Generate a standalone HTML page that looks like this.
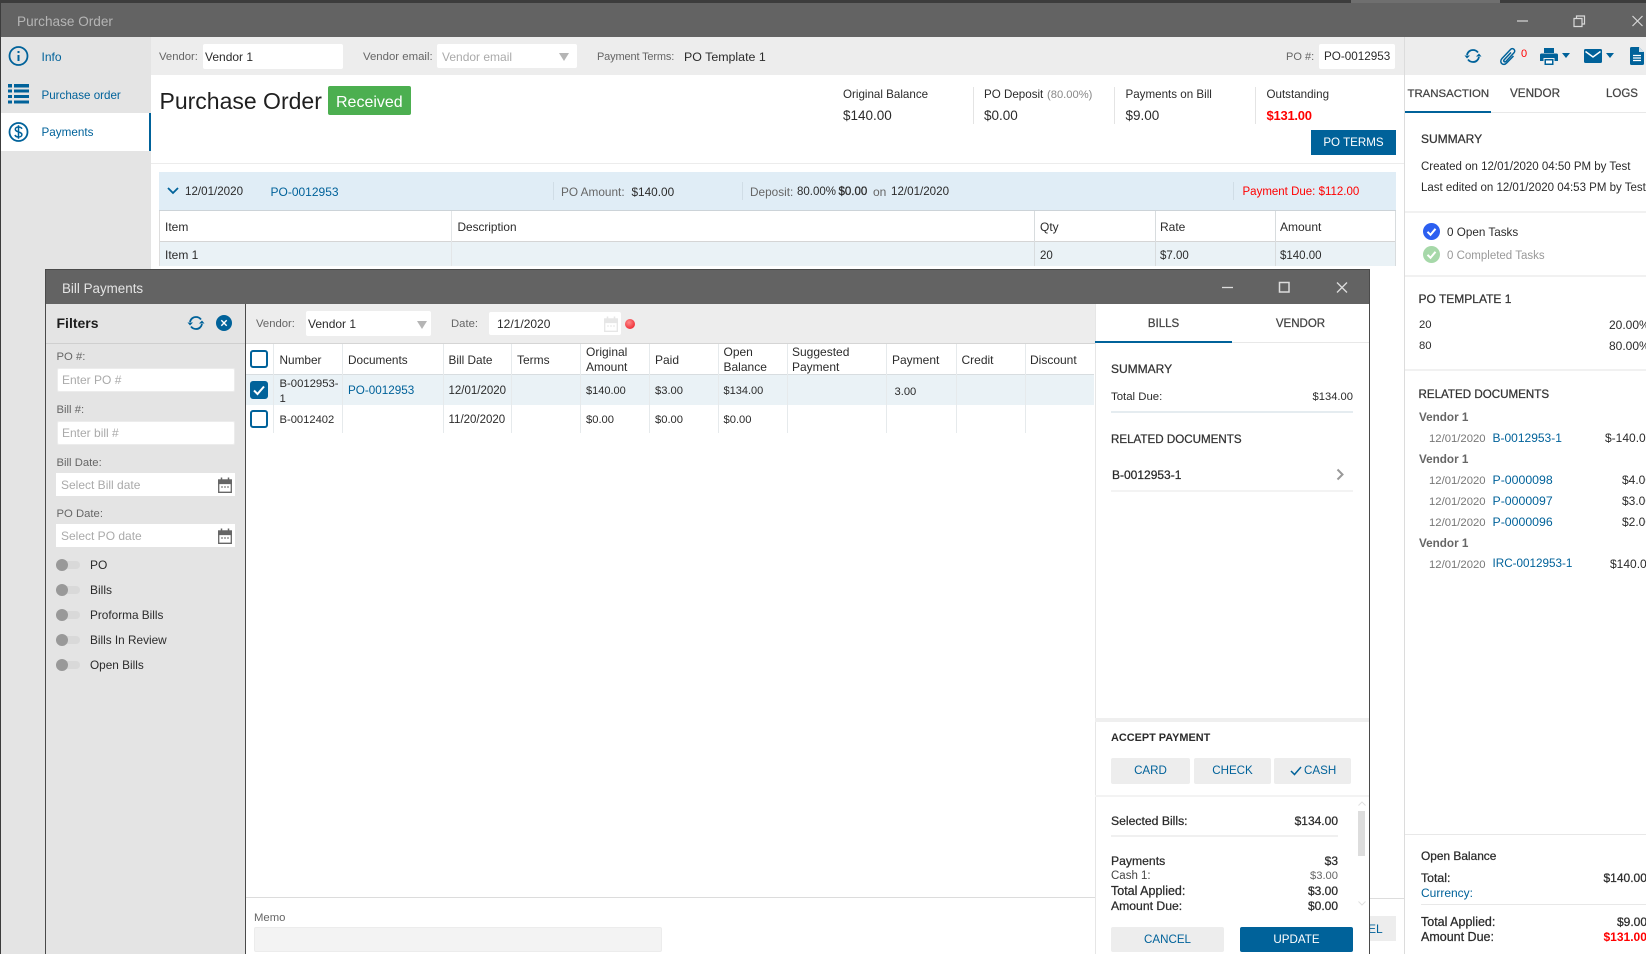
<!DOCTYPE html>
<html lang="en"><head><meta charset="utf-8"><title>Purchase Order</title>
<style>
html,body{margin:0;padding:0;width:1646px;height:954px;overflow:hidden;background:#fff}
body{position:relative;font-family:"Liberation Sans",Arial,sans-serif;font-size:12px;color:#2b2b2b}
.t{position:absolute;white-space:nowrap;line-height:16px}
.b{position:absolute;box-sizing:border-box}
.l{color:#00629a}.g{color:#666}.p{color:#aaa}.r{color:#f00}
.m{-webkit-text-stroke:.25px}.w{font-weight:bold}
.c{text-align:center}
.s{font-size:11.3px}
svg{position:absolute;overflow:visible}
.btn{position:absolute;box-sizing:border-box;background:#ededed;border-radius:2px;color:#00629a;text-align:center;line-height:26px;font-size:11.6px}
.ku{position:absolute;left:56px;width:24px;height:8px;border-radius:4px;background:#d9d9d9}
.ku:before{content:"";position:absolute;left:0;top:-2px;width:12px;height:12px;border-radius:6px;background:#999}
.chk{position:absolute;left:250px;width:18px;height:18px;box-sizing:border-box;border:2.5px solid #00629a;border-radius:3px;background:#fff}
</style></head><body>

<!-- Back window chrome -->
<div class="b" style="left:0;top:0;width:1646px;height:3px;background:#3c3c3c"></div>
<div class="b" style="left:1351px;top:0;width:149px;height:3px;background:#6f6f6f"></div>
<div class="b" style="left:0;top:3px;width:1646px;height:34px;background:#636363"></div>
<div class="b" style="left:0;top:0;width:1px;height:954px;background:#3c3c3c"></div>
<div class="t" style="left:17px;top:14px;font-size:13.600px;color:#b5b5b5">Purchase Order</div>
<svg style="left:1517px;top:15px" width="130" height="12" fill="none" stroke="#d8d8d8" stroke-width="1.200"><path d="M0 6H11"/><path d="M57 3.500h8v8h-8zM59.500 3.500V1h8v8H65"/><path d="M115.500 1l10 10M125.500 1l-10 10"/></svg>

<!-- Sidebar -->
<div class="b" style="left:1px;top:37px;width:150px;height:917px;background:#e4e4e4"></div>
<div class="b" style="left:1px;top:113px;width:150px;height:38px;background:#fff;border-right:2px solid #00629a"></div>
<svg style="left:8px;top:46px" width="21" height="20" viewBox="0 0 21 20" fill="none" stroke="#00629a" stroke-width="1.800"><circle cx="10.500" cy="10" r="9"/><path d="M10.500 9v6M10.500 5v2" stroke-width="2"/></svg>
<div class="t l" style="left:41.500px;top:49px">Info</div>
<svg style="left:8px;top:84px" width="21" height="20" fill="#00629a"><rect x="0" y="0" width="4" height="3.500"/><rect x="6" y="0" width="15" height="3.500"/><rect x="0" y="5.500" width="4" height="3"/><rect x="6" y="5.500" width="15" height="3"/><rect x="0" y="11" width="4" height="3"/><rect x="6" y="11" width="15" height="3"/><rect x="0" y="16.500" width="4" height="3"/><rect x="6" y="16.500" width="15" height="3"/></svg>
<div class="t l" style="left:41.500px;top:88px;font-size:11.600px">Purchase order</div>
<svg style="left:8px;top:122px" width="21" height="20" viewBox="0 0 21 20" fill="none" stroke="#00629a" stroke-width="1.800"><circle cx="10.500" cy="10" r="9"/><path d="M14 6.800C13.300 5.500 12 5 10.500 5 8.800 5 7.300 5.800 7.300 7.300c0 3.300 6.600 2 6.600 5.400 0 1.500-1.600 2.300-3.400 2.300-1.700 0-3-.7-3.600-2M10.500 3.300v13.400" stroke-width="1.500"/></svg>
<div class="t l" style="left:41.500px;top:125px;font-size:11.700px">Payments</div>

<!-- Top bar -->
<div class="b" style="left:151px;top:37px;width:1495px;height:38px;background:#ededed"></div>
<div class="t g s" style="left:159px;top:49px">Vendor:</div>
<div class="b" style="left:203px;top:44px;width:140px;height:25px;background:#fff;border-radius:2px"></div>
<div class="t" style="left:205px;top:49px">Vendor 1</div>
<div class="t g" style="left:363px;top:49px;font-size:11.400px">Vendor email:</div>
<div class="b" style="left:437px;top:44px;width:140px;height:24px;background:#fff;border-radius:2px"></div>
<div class="t p" style="left:442px;top:49px">Vendor email</div>
<svg style="left:559px;top:53px" width="10" height="8"><path d="M0 0H10L5 8z" fill="#b5b5b5"/></svg>
<div class="t g" style="left:597px;top:49px;font-size:11px;letter-spacing:-.15px">Payment Terms:</div>
<div class="t" style="left:684px;top:49px;font-size:12.400px">PO Template 1</div>
<div class="t g" style="left:1286px;top:49px;font-size:11px">PO #:</div>
<div class="b" style="left:1319px;top:44px;width:76px;height:25px;background:#fff;border-radius:2px"></div>
<div class="t" style="left:1324px;top:49px;font-size:11.700px">PO-0012953</div>

<!-- Heading -->
<div class="t" style="left:159.500px;top:93px;font-size:23px;color:#1f1f1f">Purchase Order</div>
<div class="b" style="left:328px;top:86px;width:83px;height:29px;background:#4caf50;border-radius:2px"></div>
<div class="t" style="left:336px;top:94.500px;font-size:16px;color:#fff">Received</div>

<div class="t" style="left:843px;top:87px;font-size:11.600px">Original Balance</div>
<div class="t" style="left:843px;top:108px;font-size:13.500px">$140.00</div>
<div class="b" style="left:973px;top:87px;width:1px;height:37px;background:#e4e4e4"></div>
<div class="t" style="left:984px;top:87px;font-size:11.600px">PO Deposit</div>
<div class="t" style="left:1047px;top:87px;font-size:11.200px;color:#888">(80.00%)</div>
<div class="t" style="left:984px;top:108px;font-size:13.500px">$0.00</div>
<div class="b" style="left:1114px;top:87px;width:1px;height:37px;background:#e4e4e4"></div>
<div class="t" style="left:1125.500px;top:87px;font-size:11.600px">Payments on Bill</div>
<div class="t" style="left:1125.500px;top:108px;font-size:13.500px">$9.00</div>
<div class="b" style="left:1255px;top:87px;width:1px;height:37px;background:#e4e4e4"></div>
<div class="t" style="left:1266.500px;top:87px;font-size:11.600px">Outstanding</div>
<div class="t r w" style="left:1266.500px;top:108px;font-size:13px;letter-spacing:-.25px">$131.00</div>
<div class="b c" style="left:1311px;top:130px;width:85px;height:25px;background:#00629a;color:#fff;line-height:26px;font-size:11.600px">PO TERMS</div>
<div class="b" style="left:151px;top:163px;width:1253px;height:1px;background:#ececec"></div>

<!-- PO row -->
<div class="b" style="left:159px;top:172px;width:1237px;height:38px;background:#e0edf6"></div>
<svg style="left:167px;top:187px" width="12" height="8" fill="none" stroke="#00629a" stroke-width="1.800"><path d="M1 1l5 5 5-5"/></svg>
<div class="t" style="left:185px;top:183.500px;font-size:11.600px">12/01/2020</div>
<div class="t l" style="left:270.500px;top:183.500px">PO-0012953</div>
<div class="b" style="left:553px;top:182px;width:1px;height:18px;background:#d0dde6"></div>
<div class="t g" style="left:561px;top:183.500px;font-size:11.800px">PO Amount:</div>
<div class="t" style="left:631.500px;top:183.500px;font-size:11.800px">$140.00</div>
<div class="b" style="left:742px;top:182px;width:1px;height:18px;background:#d0dde6"></div>
<div class="t g" style="left:750px;top:183.500px;font-size:11.800px">Deposit:</div>
<div class="t" style="left:797px;top:184px;font-size:11.500px">80.00%</div>
<div class="t m" style="left:838.500px;top:184px;font-size:11.500px">$0.00</div>
<div class="t g" style="left:873px;top:183.500px">on</div>
<div class="t" style="left:891px;top:183.500px;font-size:11.600px">12/01/2020</div>
<div class="b" style="left:1233px;top:182px;width:1px;height:18px;background:#d0dde6"></div>
<div class="t r" style="left:1242.500px;top:183.500px;font-size:11.500px">Payment Due: $112.00</div>

<!-- PO table -->
<div class="b" style="left:159px;top:210px;width:1237px;height:1px;background:#ccd3d8"></div>
<div class="b" style="left:159px;top:241px;width:1236px;height:1px;background:#d5d5d5"></div>
<div class="b" style="left:160px;top:242px;width:1236px;height:24px;background:#eaf2f6"></div>
<div class="b" style="left:159px;top:211px;width:1px;height:55px;background:#ddd"></div>
<div class="b" style="left:451px;top:211px;width:1px;height:55px;background:#e3e6e8"></div>
<div class="b" style="left:1034px;top:211px;width:1px;height:55px;background:#d8dcde"></div>
<div class="b" style="left:1154.500px;top:211px;width:1px;height:55px;background:#d8dcde"></div>
<div class="b" style="left:1274.500px;top:211px;width:1px;height:55px;background:#d8dcde"></div>
<div class="b" style="left:1394.500px;top:211px;width:1px;height:55px;background:#d8dcde"></div>
<div class="t" style="left:165px;top:219px">Item</div>
<div class="t" style="left:457.500px;top:219px;font-size:11.800px">Description</div>
<div class="t" style="left:1040px;top:219px">Qty</div>
<div class="t" style="left:1160px;top:219px">Rate</div>
<div class="t" style="left:1280px;top:219px">Amount</div>
<div class="t" style="left:165px;top:247px">Item 1</div>
<div class="t" style="left:1040px;top:248px;font-size:11.500px">20</div>
<div class="t" style="left:1160px;top:248px;font-size:11.500px">$7.00</div>
<div class="t" style="left:1280px;top:248px;font-size:11.500px">$140.00</div>

<!-- Right panel -->
<div class="b" style="left:1404px;top:37px;width:1px;height:917px;background:#dcdcdc"></div>
<svg style="left:1464px;top:47px" width="18" height="18" viewBox="0 0 18 18" fill="none" stroke="#00629a" stroke-width="1.800"><path d="M3 8c.6-3 3-5 6-5 2 0 3.800.9 5 2.500"/><path d="M15 10c-.6 3-3 5-6 5-2 0-3.800-.9-5-2.500"/><path d="M0.500 8.500H6L3 11.500z" fill="#00629a" stroke="none"/><path d="M17.500 9.500H12L15 6.500z" fill="#00629a" stroke="none"/></svg>
<svg style="left:1499px;top:47px" width="18" height="19" viewBox="0 0 18 19" fill="none" stroke="#00629a" stroke-width="1.500"><path d="M12 5.500L5.200 12.800c-1.200 1.400.5 2.900 1.800 1.600L15 5.800c2.200-2.400-1.200-5.700-3.500-3.300L3 11.500c-3.300 3.600 1 8.200 4.500 4.600L14.500 9"/></svg>
<div class="t r" style="left:1521px;top:46px;font-size:11px">0</div>
<svg style="left:1540px;top:48px" width="18" height="17" fill="#00629a"><path d="M4 0h10v5H4z"/><path d="M1.500 5.500h15A1.500 1.500 0 0 1 18 7v6h-3.500v-3h-11v3H0V7a1.500 1.500 0 0 1 1.500-1.500z"/><path d="M4.500 11h9v6h-9z"/><path d="M6 12.500h6v3H6z" fill="#fff"/></svg>
<svg style="left:1562px;top:53px" width="8" height="5"><path d="M0 0H8L4 5z" fill="#00629a"/></svg>
<svg style="left:1584px;top:49px" width="18" height="14"><rect width="18" height="14" rx="1.500" fill="#00629a"/><path d="M1.500 2.500L9 8l7.500-5.500" fill="none" stroke="#fff" stroke-width="1.500"/></svg>
<svg style="left:1606px;top:53px" width="8" height="5"><path d="M0 0H8L4 5z" fill="#00629a"/></svg>
<svg style="left:1630px;top:47px" width="14" height="18"><path d="M1.500 0H9l5 5v11.500a1.500 1.500 0 0 1-1.500 1.500h-11A1.500 1.500 0 0 1 0 16.500v-15A1.500 1.500 0 0 1 1.500 0z" fill="#00629a"/><path d="M3 8.500h8M3 11h8M3 13.500h8" stroke="#fff" stroke-width="1.300"/><path d="M9 0v5h5z" fill="#cfe0ea"/></svg>

<div class="t m" style="left:1407.500px;top:86px;color:#444;font-size:11.400px">TRANSACTION</div>
<div class="t m" style="left:1510px;top:86px;color:#444;font-size:11.700px">VENDOR</div>
<div class="t m" style="left:1606px;top:86px;color:#444;font-size:11.500px">LOGS</div>
<div class="b" style="left:1405px;top:112px;width:241px;height:1px;background:#e8e8e8"></div>
<div class="b" style="left:1405px;top:111px;width:86px;height:2px;background:#00629a"></div>

<div class="t m" style="left:1421px;top:130.500px;color:#333">SUMMARY</div>
<div class="t" style="left:1421px;top:159px;font-size:11.500px">Created on 12/01/2020 04:50 PM by Test</div>
<div class="t" style="left:1421px;top:179.500px;font-size:11.500px">Last edited on 12/01/2020 04:53 PM by Test</div>
<div class="b" style="left:1405px;top:211px;width:241px;height:2px;background:#f1f1f1"></div>
<svg style="left:1423px;top:222.500px" width="17" height="17"><circle cx="8.500" cy="8.500" r="8.500" fill="#2c5ff0"/><path d="M4.500 8.800l3 3 5-6" fill="none" stroke="#fff" stroke-width="2"/></svg>
<div class="t" style="left:1447px;top:224.500px;font-size:11.700px">0 Open Tasks</div>
<svg style="left:1423px;top:246px" width="17" height="17"><circle cx="8.500" cy="8.500" r="8.500" fill="#a6d8a9"/><path d="M4.500 8.800l3 3 5-6" fill="none" stroke="#fff" stroke-width="2"/></svg>
<div class="t" style="left:1447px;top:247.500px;font-size:11.500px;color:#999">0 Completed Tasks</div>
<div class="b" style="left:1405px;top:275px;width:241px;height:2px;background:#f1f1f1"></div>
<div class="t m" style="left:1418.500px;top:290.500px;color:#333">PO TEMPLATE 1</div>
<div class="t s" style="left:1419px;top:317px">20</div>
<div class="t" style="left:1609px;top:316.500px">20.00%</div>
<div class="t s" style="left:1419px;top:338px">80</div>
<div class="t" style="left:1609px;top:337.500px">80.00%</div>
<div class="b" style="left:1405px;top:369px;width:241px;height:2px;background:#f1f1f1"></div>
<div class="t m" style="left:1418.500px;top:386.500px;color:#333;font-size:11.600px">RELATED DOCUMENTS</div>

<div class="t w" style="left:1419px;top:409.500px;color:#666;font-size:11.700px">Vendor 1</div>
<div class="t s" style="left:1429px;top:431px;color:#777">12/01/2020</div>
<div class="t l" style="left:1492.500px;top:429.500px;font-size:12px">B-0012953-1</div>
<div class="t" style="left:1605px;top:430px">$-140.00</div>
<div class="t w" style="left:1419px;top:451.500px;color:#666;font-size:11.700px">Vendor 1</div>
<div class="t s" style="left:1429px;top:473px;color:#777">12/01/2020</div>
<div class="t l" style="left:1492.500px;top:471.500px;font-size:12.300px">P-0000098</div>
<div class="t" style="left:1622px;top:472px">$4.00</div>
<div class="t s" style="left:1429px;top:494px;color:#777">12/01/2020</div>
<div class="t l" style="left:1492.500px;top:492.500px;font-size:12.300px">P-0000097</div>
<div class="t" style="left:1622px;top:493px">$3.00</div>
<div class="t s" style="left:1429px;top:515px;color:#777">12/01/2020</div>
<div class="t l" style="left:1492.500px;top:513.500px;font-size:12.300px">P-0000096</div>
<div class="t" style="left:1622px;top:514px">$2.00</div>
<div class="t w" style="left:1419px;top:535.500px;color:#666;font-size:11.700px">Vendor 1</div>
<div class="t s" style="left:1429px;top:557px;color:#777">12/01/2020</div>
<div class="t l" style="left:1492.500px;top:555.500px;font-size:11.700px">IRC-0012953-1</div>
<div class="t" style="left:1610px;top:556px">$140.00</div>

<div class="b" style="left:1405px;top:834px;width:241px;height:1px;background:#e8e8e8"></div>
<div class="t m" style="left:1421px;top:848px;font-size:11.900px">Open Balance</div>
<div class="t m" style="left:1421px;top:870px;font-size:12.300px">Total:</div>
<div class="t m" style="left:1603.500px;top:870px">$140.00</div>
<div class="t l" style="left:1421px;top:885px">Currency:</div>
<div class="b" style="left:1421px;top:904px;width:225px;height:1px;background:#e8e8e8"></div>
<div class="t m" style="left:1421px;top:913.500px;font-size:12.500px">Total Applied:</div>
<div class="t m" style="left:1617px;top:913.500px">$9.00</div>
<div class="t m" style="left:1421px;top:928.500px;font-size:12.500px">Amount Due:</div>
<div class="t r w" style="left:1603.500px;top:928.500px">$131.00</div>

<!-- Behind modal footer -->
<div class="b" style="left:1340px;top:898px;width:64px;height:1px;background:#ddd"></div>
<div class="b" style="left:1340px;top:916px;width:56px;height:25px;background:#ededed"></div>
<div class="t l" style="left:1334px;top:920.500px">CANCEL</div>

<!-- Modal -->
<div class="b" style="left:45px;top:269px;width:1325px;height:685px;background:#fff;border:1px solid #4a4a4a;border-bottom:0"></div>
<div class="b" style="left:45px;top:269px;width:1325px;height:35px;background:#636363;border:1px solid #4a4a4a;border-bottom:0"></div>
<div class="t" style="left:62px;top:280.500px;font-size:13.400px;color:#e4e4e4">Bill Payments</div>
<svg style="left:1222px;top:281px" width="126" height="13" fill="none" stroke="#ddd" stroke-width="1.300"><path d="M0 6.500H11"/><path d="M57.500 1.500h9.500v9.500h-9.500z" stroke-width="1.500"/><path d="M115 1.500l10 10M125 1.500l-10 10"/></svg>

<!-- Filters -->
<div class="b" style="left:46px;top:304px;width:199px;height:650px;background:#e4e4e4"></div>
<div class="b" style="left:245px;top:304px;width:1px;height:650px;background:#4a4a4a"></div>
<div class="b" style="left:46px;top:343px;width:199px;height:1px;background:#cfcfcf"></div>
<div class="t w" style="left:56.500px;top:315px;font-size:14px;color:#1d1d1d">Filters</div>
<svg style="left:187px;top:314px" width="18" height="18" viewBox="0 0 18 18" fill="none" stroke="#00629a" stroke-width="1.800"><path d="M3 8c.6-3 3-5 6-5 2 0 3.800.9 5 2.500"/><path d="M15 10c-.6 3-3 5-6 5-2 0-3.800-.9-5-2.500"/><path d="M0.500 8.500H6L3 11.500z" fill="#00629a" stroke="none"/><path d="M17.500 9.500H12L15 6.500z" fill="#00629a" stroke="none"/></svg>
<svg style="left:216px;top:315px" width="16" height="16"><circle cx="8" cy="8" r="8" fill="#00629a"/><path d="M5.300 5.300l5.400 5.400M10.700 5.300l-5.400 5.400" stroke="#fff" stroke-width="1.400"/></svg>

<div class="t g s" style="left:56.500px;top:349px">PO #:</div>
<div class="b" style="left:56.500px;top:367.500px;width:178.500px;height:24px;background:#fff;border:1px solid #ececec;border-radius:2px"></div>
<div class="t p" style="left:62px;top:371.500px">Enter PO #</div>
<div class="t g s" style="left:56.500px;top:402px">Bill #:</div>
<div class="b" style="left:56.500px;top:420.500px;width:178.500px;height:24px;background:#fff;border:1px solid #ececec;border-radius:2px"></div>
<div class="t p" style="left:62px;top:424.500px">Enter bill #</div>
<div class="t g s" style="left:56.500px;top:455px">Bill Date:</div>
<div class="b" style="left:56px;top:473px;width:179px;height:23px;background:#fff"></div>
<div class="t p" style="left:61px;top:477px">Select Bill date</div>
<svg style="left:218px;top:477px" width="14" height="16" fill="none" stroke="#666" stroke-width="1.300"><path d="M.7 3h12.600v12.300H.7z"/><path d="M.7 3h12.600v3.500H.7z" fill="#666"/><path d="M3.500 .5v3M10.500 .5v3" stroke-width="1.500"/><path d="M3 10h2M6 10h2M9 10h2" stroke-width="1"/></svg>
<div class="t g s" style="left:56.500px;top:506px">PO Date:</div>
<div class="b" style="left:56px;top:524px;width:179px;height:23px;background:#fff"></div>
<div class="t p" style="left:61px;top:528px">Select PO date</div>
<svg style="left:218px;top:528px" width="14" height="16" fill="none" stroke="#666" stroke-width="1.300"><path d="M.7 3h12.600v12.300H.7z"/><path d="M.7 3h12.600v3.500H.7z" fill="#666"/><path d="M3.500 .5v3M10.500 .5v3" stroke-width="1.500"/><path d="M3 10h2M6 10h2M9 10h2" stroke-width="1"/></svg>

<div class="ku" style="top:560.500px"></div><div class="t" style="left:90px;top:556.500px">PO</div>
<div class="ku" style="top:585.500px"></div><div class="t" style="left:90px;top:581.500px">Bills</div>
<div class="ku" style="top:610.500px"></div><div class="t" style="left:90px;top:606.500px;font-size:11.800px">Proforma Bills</div>
<div class="ku" style="top:635.500px"></div><div class="t" style="left:90px;top:631.500px;font-size:11.800px">Bills In Review</div>
<div class="ku" style="top:660.500px"></div><div class="t" style="left:90px;top:656.500px;font-size:11.800px">Open Bills</div>

<!-- Middle toolbar -->
<div class="b" style="left:246px;top:304px;width:849px;height:39px;background:#ededed"></div>
<div class="b" style="left:246px;top:343px;width:849px;height:1px;background:#d5d5d5"></div>
<div class="t g s" style="left:256px;top:316px">Vendor:</div>
<div class="b" style="left:306px;top:311px;width:125px;height:25px;background:#fff;border-radius:2px"></div>
<div class="t" style="left:308px;top:316px">Vendor 1</div>
<svg style="left:417px;top:320.500px" width="10" height="8"><path d="M0 0H10L5 8z" fill="#b5b5b5"/></svg>
<div class="t g s" style="left:451px;top:316px">Date:</div>
<div class="b" style="left:489px;top:312px;width:132px;height:23px;background:#fff;border-radius:2px"></div>
<div class="t" style="left:497px;top:315.500px">12/1/2020</div>
<svg style="left:604px;top:316px" width="14" height="16" fill="none" stroke="#e6e6e6" stroke-width="1.300"><path d="M.7 3h12.600v12.300H.7z"/><path d="M.7 3h12.600v3.500H.7z" fill="#e6e6e6"/><path d="M3.500 .5v3M10.500 .5v3" stroke-width="1.500"/><path d="M3 10h2M6 10h2M9 10h2" stroke-width="1"/></svg>
<svg style="left:625px;top:319px" width="10" height="10"><defs><radialGradient id="rd" cx=".4" cy=".35" r=".7"><stop offset="0" stop-color="#ff8a8a"/><stop offset="1" stop-color="#ee2a33"/></radialGradient></defs><circle cx="5" cy="5" r="5" fill="url(#rd)"/></svg>

<!-- Bills grid -->
<div class="b" style="left:246px;top:374px;width:848px;height:1px;background:#d8dde0"></div>
<div class="b" style="left:246px;top:375px;width:848px;height:30px;background:#eaf2f6"></div>
<div class="b" style="left:273px;top:344px;width:1px;height:89px;background:#e6eaec"></div>
<div class="b" style="left:342px;top:344px;width:1px;height:89px;background:#e6eaec"></div>
<div class="b" style="left:442.500px;top:344px;width:1px;height:89px;background:#e6eaec"></div>
<div class="b" style="left:511px;top:344px;width:1px;height:89px;background:#e6eaec"></div>
<div class="b" style="left:580px;top:344px;width:1px;height:89px;background:#e6eaec"></div>
<div class="b" style="left:649px;top:344px;width:1px;height:89px;background:#e6eaec"></div>
<div class="b" style="left:718px;top:344px;width:1px;height:89px;background:#e6eaec"></div>
<div class="b" style="left:786.500px;top:344px;width:1px;height:89px;background:#e6eaec"></div>
<div class="b" style="left:886px;top:344px;width:1px;height:89px;background:#e6eaec"></div>
<div class="b" style="left:955.500px;top:344px;width:1px;height:89px;background:#e6eaec"></div>
<div class="b" style="left:1024.500px;top:344px;width:1px;height:89px;background:#e6eaec"></div>
<div class="chk" style="top:350px"></div>
<div class="chk" style="top:381px;background:#00629a"></div>
<svg style="left:253px;top:384px" width="12" height="12" fill="none" stroke="#fff" stroke-width="2"><path d="M1 6.500l3.500 3.500L11 2.500"/></svg>
<div class="chk" style="top:410px"></div>

<div class="t" style="left:279.500px;top:351.500px;font-size:11.800px">Number</div>
<div class="t" style="left:348px;top:351.500px;font-size:11.800px">Documents</div>
<div class="t" style="left:448.500px;top:351.500px;font-size:11.800px">Bill Date</div>
<div class="t" style="left:517px;top:351.500px">Terms</div>
<div class="t" style="left:586px;top:344px">Original</div>
<div class="t" style="left:586px;top:359px">Amount</div>
<div class="t" style="left:655px;top:351.500px">Paid</div>
<div class="t" style="left:723.500px;top:344px">Open</div>
<div class="t" style="left:723.500px;top:359px">Balance</div>
<div class="t" style="left:792px;top:344px">Suggested</div>
<div class="t" style="left:792px;top:359px">Payment</div>
<div class="t" style="left:892px;top:351.500px">Payment</div>
<div class="t" style="left:961.500px;top:351.500px">Credit</div>
<div class="t" style="left:1030px;top:351.500px">Discount</div>

<div class="t" style="left:279.500px;top:376px;font-size:11.300px">B-0012953-</div>
<div class="t" style="left:279.500px;top:390.500px;font-size:11.300px">1</div>
<div class="t l" style="left:348px;top:383px;font-size:11.700px">PO-0012953</div>
<div class="t" style="left:448.500px;top:382.500px;font-size:11.500px">12/01/2020</div>
<div class="t" style="left:586px;top:382.500px;font-size:11px">$140.00</div>
<div class="t" style="left:655px;top:382.500px;font-size:11.200px">$3.00</div>
<div class="t" style="left:723.500px;top:382.500px;font-size:11px">$134.00</div>
<div class="t" style="left:894.500px;top:383.500px;font-size:11.200px">3.00</div>
<div class="t" style="left:279.500px;top:411.500px;font-size:11.200px">B-0012402</div>
<div class="t" style="left:448.500px;top:411.500px;font-size:11.500px">11/20/2020</div>
<div class="t" style="left:586px;top:411.500px;font-size:11.200px">$0.00</div>
<div class="t" style="left:655px;top:411.500px;font-size:11.200px">$0.00</div>
<div class="t" style="left:723.500px;top:411.500px;font-size:11.200px">$0.00</div>

<!-- Memo -->
<div class="b" style="left:246px;top:897px;width:849px;height:1px;background:#dcdcdc"></div>
<div class="t g" style="left:254px;top:909.500px;font-size:11.300px">Memo</div>
<div class="b" style="left:254px;top:927px;width:408px;height:25px;background:#f3f3f3;border:1px solid #ececec;border-radius:2px"></div>

<!-- Bills side -->
<div class="b" style="left:1094.500px;top:304px;width:1px;height:650px;background:#e6e6e6"></div>
<div class="b" style="left:1095px;top:342px;width:274px;height:1px;background:#e8e8e8"></div>
<div class="b" style="left:1095px;top:341px;width:137px;height:2px;background:#00629a"></div>
<div class="t c m" style="left:1095px;width:137px;top:316px;color:#444;font-size:11.500px">BILLS</div>
<div class="t c m" style="left:1232px;width:137px;top:316px;color:#444;font-size:11.500px">VENDOR</div>
<div class="t m" style="left:1111px;top:360.500px;color:#333">SUMMARY</div>
<div class="t" style="left:1111px;top:389px;font-size:11.400px">Total Due:</div>
<div class="t" style="right:293px;top:389px;font-size:11.200px">$134.00</div>
<div class="b" style="left:1111px;top:411px;width:242px;height:2px;background:#e5ecf0"></div>
<div class="t m" style="left:1111px;top:431.500px;color:#333;font-size:11.600px">RELATED DOCUMENTS</div>
<div class="t m" style="left:1112px;top:466.500px;font-size:12px">B-0012953-1</div>
<svg style="left:1336px;top:468px" width="8" height="13" fill="none" stroke="#999" stroke-width="2"><path d="M1.500 1.500l5 5-5 5"/></svg>
<div class="b" style="left:1111px;top:489.500px;width:242px;height:2px;background:#f3f3f3"></div>

<div class="b" style="left:1095px;top:718px;width:274px;height:4px;background:#efefef"></div>
<div class="t w" style="left:1111px;top:730px;font-size:10.900px">ACCEPT PAYMENT</div>
<div class="btn" style="left:1111px;top:757.500px;width:79px;height:26px">CARD</div>
<div class="btn" style="left:1194px;top:757.500px;width:77px;height:26px">CHECK</div>
<div class="btn" style="left:1274px;top:757.500px;width:77px;height:26px;text-align:left;padding-left:30px">CASH</div>
<svg style="left:1290px;top:766px" width="12" height="10" fill="none" stroke="#00629a" stroke-width="1.500"><path d="M1 5l3.500 3.500L11 1"/></svg>
<div class="b" style="left:1095px;top:795px;width:274px;height:2px;background:#f3f3f3"></div>
<svg style="left:1358px;top:801px" width="8" height="5" fill="none" stroke="#e0e0e0"><path d="M.5 4.500L4 1l3.500 3.500"/></svg>
<div class="b" style="left:1358px;top:811px;width:7px;height:45px;background:#ddd"></div>
<svg style="left:1358px;top:901px" width="8" height="5" fill="none" stroke="#e0e0e0"><path d="M.5 .5L4 4l3.500-3.500"/></svg>

<div class="t m" style="left:1111px;top:812.500px;font-size:12.200px">Selected Bills:</div>
<div class="t m" style="right:308px;top:812.500px">$134.00</div>
<div class="b" style="left:1111px;top:835px;width:227px;height:2px;background:#f0f0f0"></div>
<div class="t m" style="left:1111px;top:852.500px;font-size:12.200px">Payments</div>
<div class="t m" style="right:308px;top:852.500px">$3</div>
<div class="t" style="left:1111px;top:867.500px;font-size:11.500px;color:#444">Cash 1:</div>
<div class="t" style="right:308px;top:867.500px;font-size:11.200px;color:#666">$3.00</div>
<div class="t m" style="left:1111px;top:882.500px;font-size:12.500px">Total Applied:</div>
<div class="t m" style="right:308px;top:882.500px">$3.00</div>
<div class="t m" style="left:1111px;top:897.500px;font-size:12.200px">Amount Due:</div>
<div class="t m" style="right:308px;top:897.500px">$0.00</div>
<div class="btn" style="left:1111px;top:927px;width:113px;height:25px;line-height:26px">CANCEL</div>
<div class="btn" style="left:1240px;top:927px;width:113px;height:25px;line-height:26px;background:#00629a;color:#fff">UPDATE</div>

</body></html>
